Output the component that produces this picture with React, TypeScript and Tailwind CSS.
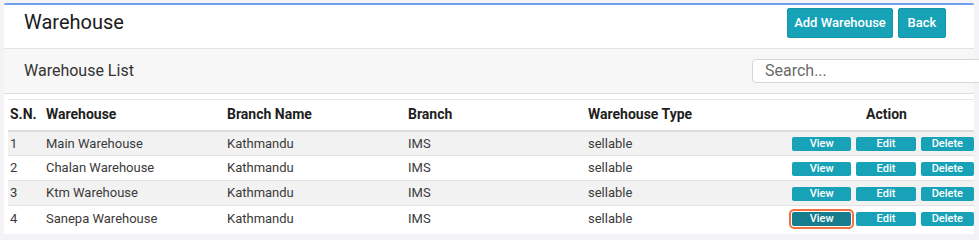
import React from "react";

const rows = [
  { sn: 1, name: "Main Warehouse", branchName: "Kathmandu", branch: "IMS", type: "sellable" },
  { sn: 2, name: "Chalan Warehouse", branchName: "Kathmandu", branch: "IMS", type: "sellable" },
  { sn: 3, name: "Ktm Warehouse", branchName: "Kathmandu", branch: "IMS", type: "sellable" },
  { sn: 4, name: "Sanepa Warehouse", branchName: "Kathmandu", branch: "IMS", type: "sellable" },
];

export default function App() {
  return (
    <div
      className="w-[979px] h-[240px] overflow-hidden bg-[#f3f3f6] pt-[3px] pl-[4px] pr-[5px]"
      style={{ fontFamily: "Roboto, 'Liberation Sans', sans-serif" }}
    >
      <div className="bg-white border-t-2 border-[#6f9ff0] rounded-t-[2px]">
        {/* Page header */}
        <div className="h-[44px] flex items-start justify-between pl-5 pr-[28px] pt-[3px] border-b border-[#e3e3e3]">
          <h1 className="text-[20px] leading-[26px] text-[#1b1b1b] mt-[1px]">Warehouse</h1>
          <div className="flex gap-[5px]">
            <button className="w-[106px] h-[30px] bg-[#17a2b8] text-white text-[13px] font-medium rounded-[2px] border border-[#1595a9]">
              Add Warehouse
            </button>
            <button className="w-[48px] h-[30px] bg-[#17a2b8] text-white text-[13px] font-medium rounded-[2px] border border-[#1595a9]">
              Back
            </button>
          </div>
        </div>

        {/* List bar */}
        <div className="h-[45px] bg-[#f7f7f7] border-b border-[#dedede] flex items-center justify-between pl-5">
          <span className="text-[16px] text-[#333]">Warehouse List</span>
          <input
            placeholder="Search..."
            className="w-[230px] h-[24px] mr-[-8px] bg-white border border-[#d6d6d6] rounded-[4px] px-3 text-[16px] text-[#555] placeholder:text-[#6b6b6b] outline-none"
          />
        </div>

        {/* Table */}
        <div className="pt-[5px] pl-[4px] pb-[3px]">
          <table className="w-full table-fixed border-collapse text-[13px] text-[#3a3a3a]">
            <colgroup>
              <col className="w-[36px]" />
              <col className="w-[181px]" />
              <col className="w-[181px]" />
              <col className="w-[180px]" />
              <col className="w-[199px]" />
              <col />
            </colgroup>
            <thead>
              <tr className="h-[31px] border-t border-[#e6e6e6] border-b-2 border-b-[#dcdcdc] text-[14px] font-bold text-[#1e1e1e]">
                <th className="text-left pl-[2px]">S.N.</th>
                <th className="text-left pl-[2px]">Warehouse</th>
                <th className="text-left pl-[2px]">Branch Name</th>
                <th className="text-left pl-[2px]">Branch</th>
                <th className="text-left pl-[2px]">Warehouse Type</th>
                <th className="text-center pl-[14px]">Action</th>
              </tr>
            </thead>
            <tbody>
              {rows.map((r, i) => (
                <tr
                  key={r.sn}
                  className={`h-[25px] border-t border-[#e2e2e2] ${i % 2 === 0 ? "bg-[#f2f2f2]" : "bg-white"}`}
                >
                  <td className="pl-[2px]">{r.sn}</td>
                  <td className="pl-[2px]">{r.name}</td>
                  <td className="pl-[2px]">{r.branchName}</td>
                  <td className="pl-[2px]">{r.branch}</td>
                  <td className="pl-[2px]">{r.type}</td>
                  <td>
                    <div className="flex items-center pl-[7px] pt-[2px] gap-[5px]">
                      <button
                        className={`w-[60px] h-[14px] text-[11px] leading-[14px] font-medium text-white rounded-[2px] ${
                          r.sn === 4
                            ? "bg-[#157d8e] outline-2 outline-offset-[1px] outline-[#f1703e]"
                            : "bg-[#17a2b8]"
                        }`}
                      >
                        View
                      </button>
                      <button className="w-[60px] h-[14px] text-[11px] leading-[14px] font-medium text-white rounded-[2px] bg-[#17a2b8]">
                        Edit
                      </button>
                      <button className="w-[54px] h-[14px] text-[11px] leading-[14px] font-medium text-white rounded-[2px] bg-[#17a2b8]">
                        Delete
                      </button>
                    </div>
                  </td>
                </tr>
              ))}
            </tbody>
          </table>
        </div>
      </div>
    </div>
  );
}
